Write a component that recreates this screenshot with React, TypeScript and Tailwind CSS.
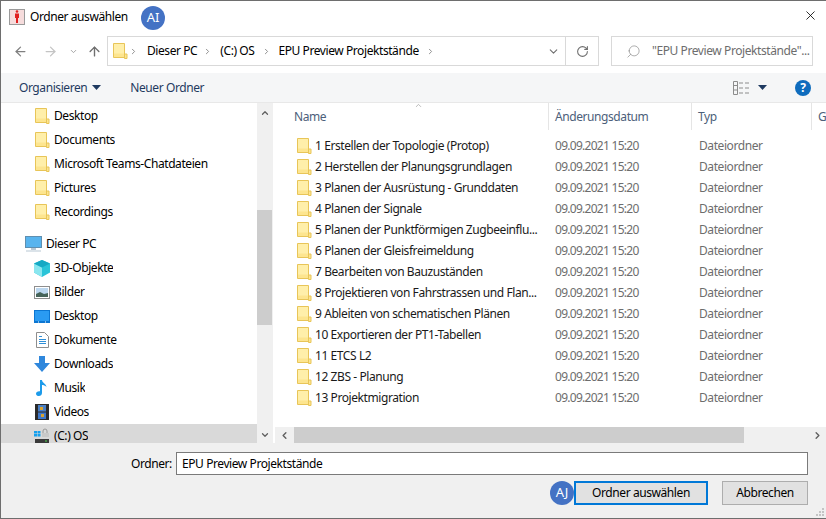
import React from 'react';
import { ArrowLeft, ArrowRight, ArrowUp, ChevronDown, ChevronRight, ChevronLeft, ChevronUp, RotateCw, Search, X } from 'lucide-react';

const FolderIcon = () => (
  <svg width="16" height="16" viewBox="0 0 16 16" className="shrink-0">
    <path d="M1.500 0.500h11v14h-11z" fill="#fde58f" stroke="#e8c558" />
    <path d="M2 1h10v9.500H2z" fill="#ffefaa" />
    <path d="M12.500 11h2.500v4.500h-2.500z" fill="#fde58f" stroke="#e8c558" />
  </svg>
);

const quickFolders = ['Desktop', 'Documents', 'Microsoft Teams-Chatdateien', 'Pictures', 'Recordings'];

const pcItems: { name: string; icon: React.ReactNode }[] = [
  {
    name: '3D-Objekte',
    icon: (
      <svg width="16" height="17" viewBox="0 0 16 17">
        <path d="M8 0l8 3.500v9L8 17 0 12.500v-9z" fill="#29c4d8" />
        <path d="M0 3.500L8 7.500V17L0 12.500z" fill="#8ae6ef" />
        <path d="M8 0l8 3.500-8 4-8-4z" fill="#15a9c4" />
      </svg>
    ),
  },
  {
    name: 'Bilder',
    icon: (
      <svg width="16" height="13" viewBox="0 0 16 13">
        <rect x="0.500" y="0.500" width="15" height="12" fill="#fff" stroke="#8e8e8e" />
        <rect x="2" y="2" width="12" height="9" fill="#bcd7ef" />
        <path d="M2 8l4-2 4 2 4-1v4H2z" fill="#46645a" />
      </svg>
    ),
  },
  {
    name: 'Desktop',
    icon: (
      <svg width="16" height="13" viewBox="0 0 16 13">
        <rect width="16" height="13" fill="#0b76d2" />
        <rect x="1" y="1" width="14" height="10" fill="#2a9bf2" />
        <rect x="4" y="11.500" width="1" height="1" fill="#fff" />
        <rect x="11" y="11.500" width="1" height="1" fill="#fff" />
      </svg>
    ),
  },
  {
    name: 'Dokumente',
    icon: (
      <svg width="13" height="16" viewBox="0 0 13 16" className="ml-[2px]">
        <path d="M0.500 0.500h8l4 4v11h-12z" fill="#fff" stroke="#8e8e8e" />
        <path d="M3 4h3v1H3zM3 7h7v1H3zM3 9h7v1H3zM3 11h7v1H3z" fill="#2f8fd8" />
      </svg>
    ),
  },
  {
    name: 'Downloads',
    icon: (
      <svg width="16" height="16" viewBox="0 0 16 16">
        <path d="M5 0h6v7h5l-8 9-8-9h5z" fill="#2f87dc" />
      </svg>
    ),
  },
  {
    name: 'Musik',
    icon: (
      <svg width="11" height="16" viewBox="0 0 11 16" className="ml-[2px]">
        <path d="M4 0h2c0 3 4 3.500 4.500 7C9 5.500 7.500 5 6 5v8c0 2-1.500 3-3 3s-3-.8-3-2.300C0 12 1.800 11 4 11.300z" fill="#1d9bea" />
      </svg>
    ),
  },
  {
    name: 'Videos',
    icon: (
      <svg width="14" height="16" viewBox="0 0 14 16" className="ml-[1px]">
        <rect width="14" height="16" fill="#2b2b2b" />
        <rect x="3" y="1" width="8" height="6.500" fill="#4a7fc4" />
        <rect x="3" y="8.500" width="8" height="6.500" fill="#3f78c9" />
        <path d="M5 3h3v3H5zM6 10h3v3H6z" fill="#d8a330" />
      </svg>
    ),
  },
];

const folders = [
  '1 Erstellen der Topologie (Protop)',
  '2 Herstellen der Planungsgrundlagen',
  '3 Planen der Ausrüstung - Grunddaten',
  '4 Planen der Signale',
  '5 Planen der Punktförmigen Zugbeeinflu...',
  '6 Planen der Gleisfreimeldung',
  '7 Bearbeiten von Bauzuständen',
  '8 Projektieren von Fahrstrassen und Flan...',
  '9 Ableiten von schematischen Plänen',
  '10 Exportieren der PT1-Tabellen',
  '11 ETCS L2',
  '12 ZBS - Planung',
  '13 Projektmigration',
];

const NavRow = ({ icon, name, selected }: { icon: React.ReactNode; name: string; selected?: boolean }) => (
  <div className={`flex h-6 items-center ${selected ? 'bg-[#d9d9d9]' : ''}`}>
    <div className="ml-[33px] flex w-[20px] shrink-0 justify-start">{icon}</div>
    <span className="truncate">{name}</span>
  </div>
);

export default function App() {
  return (
    <div className="relative flex h-[519px] w-[826px] flex-col overflow-hidden border-l border-t border-b border-[#6e6e6e] bg-white font-['Noto_Sans','Open_Sans',sans-serif] text-[12px] tracking-[-0.42px] text-black">
      {/* title bar */}
      <div className="flex h-[31px] shrink-0 items-center">
        <div className="ml-[8px] flex h-[16px] w-[16px] items-center justify-center border border-[#9a9a9a] bg-[#f6dcdc]">
          <svg width="6" height="13" viewBox="0 0 6 13">
            <circle cx="3" cy="1.500" r="1.300" fill="#e02020" />
            <path d="M1 3.500h4V8H4v5H2V8H1z" fill="#e02020" />
          </svg>
        </div>
        <span className="ml-[5px]">Ordner auswählen</span>
        <X size={15} strokeWidth={1.300} className="ml-auto mr-[8px] mt-[-2px]" />
      </div>

      {/* address bar */}
      <div className="flex h-[41px] shrink-0 items-start pt-[4px]">
        <div className="flex h-[30px] w-[106px] items-center text-[#7f7f7f]">
          <ArrowLeft size={15} strokeWidth={2} className="ml-[12px]" />
          <ArrowRight size={15} strokeWidth={2} className="ml-[15px] text-[#c4c4c4]" />
          <ChevronDown size={9} strokeWidth={2.500} className="ml-[11px] text-[#a0a0a0]" />
          <ArrowUp size={15} strokeWidth={2.200} className="ml-[9px] text-[#6f6f6f]" />
        </div>
        <div className="flex h-[30px] w-[458px] items-center border border-r-0 border-[#d9d9d9]">
          <div className="ml-[4px]"><FolderIcon /></div>
          <ChevronRight size={9} strokeWidth={2.500} className="ml-[1px] text-[#8a8a8a]" />
          <span className="ml-[9px]">Dieser PC</span>
          <ChevronRight size={9} strokeWidth={2.500} className="ml-[6px] text-[#8a8a8a]" />
          <span className="ml-[8px]">(C:) OS</span>
          <ChevronRight size={9} strokeWidth={2.500} className="ml-[8px] text-[#8a8a8a]" />
          <span className="ml-[7px]">EPU Preview Projektstände</span>
          <ChevronRight size={9} strokeWidth={2.500} className="ml-[7px] text-[#8a8a8a]" />
          <ChevronDown size={13} strokeWidth={2} className="ml-auto mr-[5px] text-[#6f6f6f]" />
        </div>
        <div className="flex h-[30px] w-[34px] items-center justify-center border border-[#d9d9d9]">
          <RotateCw size={13} strokeWidth={2} className="text-[#6f6f6f]" />
        </div>
        <div className="ml-[12px] flex h-[30px] w-[202px] items-center border border-[#d9d9d9] text-[#6d6d6d]">
          <Search size={15} strokeWidth={1} className="ml-[14px] -scale-x-100 text-[#7d7d7d]" />
          <span className="ml-[11px] whitespace-nowrap">"EPU Preview Projektstände"...</span>
        </div>
      </div>

      {/* toolbar */}
      <div className="flex h-[30px] shrink-0 items-center border-b border-[#e8e8e8] bg-[#f5f6f7] text-[#1f3a60]">
        <span className="ml-[18px]">Organisieren</span>
        <svg width="9" height="5" viewBox="0 0 9 5" className="ml-[5px]"><path d="M0 0h9L4.500 5z" fill="#1f3a60" /></svg>
        <span className="ml-[29px]">Neuer Ordner</span>
        <svg width="17" height="14" viewBox="0 0 17 14" className="ml-auto">
          <path d="M0.500 0.500h4v13h-4zM0.500 4.500h4M0.500 9h4" fill="none" stroke="#8c8c8c" />
          <path d="M6 2h4M12 2h4M6 7h4M12 7h4M6 12h4M12 12h4" stroke="#8c8c8c" />
        </svg>
        <svg width="9" height="5" viewBox="0 0 9 5" className="ml-[8px]"><path d="M0 0h9L4.500 5z" fill="#1f3a60" /></svg>
        <div className="ml-[28px] mr-[15px] flex h-[16px] w-[16px] items-center justify-center rounded-full bg-[#0f6cbd] text-[12px] font-bold text-white">?</div>
      </div>

      {/* main area */}
      <div className="flex h-[340px] shrink-0">
        {/* navigation tree */}
        <div className="w-[256px] shrink-0 overflow-hidden pt-[1px]">
          {quickFolders.map((name) => (
            <NavRow key={name} name={name} icon={<FolderIcon />} />
          ))}
          <div className="h-[8px]" />
          <div className="flex h-6 items-center">
            <svg width="17" height="16" viewBox="0 0 17 16" className="ml-[24px] shrink-0">
              <rect x="0.500" y="0.500" width="16" height="11" fill="#58b4ee" stroke="#5f8fb0" />
              <path d="M6 12h5v2H6zM1 14.500h15v1H1z" fill="#b8c8d4" />
            </svg>
            <span className="ml-[4px]">Dieser PC</span>
          </div>
          {pcItems.map((item) => (
            <NavRow key={item.name} name={item.name} icon={item.icon} />
          ))}
          <NavRow
            name="(C:) OS"
            selected
            icon={
              <svg width="16" height="16" viewBox="0 0 16 16">
                <path d="M0 3h3v2.500H0zM3.500 3h3v2.500h-3zM0 6h3v2.500H0zM3.500 6h3v2.500h-3z" fill="#14a0ee" />
                <path d="M9 5V3a2 2 0 0 1 4 0v2" fill="none" stroke="#9a9a9a" />
                <rect x="8" y="5" width="7" height="4" fill="#c9c9c9" />
                <rect x="1" y="11" width="14" height="4" fill="#3a3a3a" />
                <rect x="11" y="12.500" width="2" height="1" fill="#4fd04f" />
              </svg>
            }
          />
        </div>

        {/* tree scrollbar */}
        <div className="flex w-[15px] shrink-0 flex-col bg-[#f0f0f0]">
          <div className="flex h-[19px] items-center justify-center"><ChevronUp size={10} strokeWidth={3} className="text-[#606060]" /></div>
          <div className="h-[88px]" />
          <div className="h-[115px] bg-[#cdcdcd]" />
          <div className="flex-1" />
          <div className="flex h-[17px] items-center justify-center"><ChevronDown size={10} strokeWidth={3} className="text-[#606060]" /></div>
        </div>
        <div className="w-[3px] shrink-0 border-l border-[#f0f0f0]" />

        {/* file list */}
        <div className="flex min-w-0 flex-1 flex-col">
          <div className="relative flex h-[27px] shrink-0 text-[#4c607a]">
            <div className="flex w-[274px] items-center border-r border-[#e5e5e5] pl-[19px]">Name</div>
            <div className="flex w-[143px] items-center border-r border-[#e5e5e5] pl-[6px]">Änderungsdatum</div>
            <div className="flex w-[120px] items-center border-r border-[#e5e5e5] pl-[6px]">Typ</div>
            <div className="flex flex-1 items-center overflow-hidden pl-[6px]">G</div>
            <ChevronUp size={9} strokeWidth={1.500} className="absolute left-[139px] top-[-2px] text-[#8a8a8a]" />
          </div>
          <div className="flex flex-1 flex-col pt-[5px]">
            {folders.map((name) => (
              <div key={name} className="flex h-[21px] shrink-0 items-center">
                <div className="ml-[21px] w-[19px] shrink-0"><FolderIcon /></div>
                <span className="w-[240px] truncate whitespace-nowrap text-[#1a1a1a]">{name}</span>
                <span className="w-[144px] tracking-[-0.72px] text-[#6d6d6d]">09.09.2021 15:20</span>
                <span className="text-[#6d6d6d]">Dateiordner</span>
              </div>
            ))}
          </div>
          {/* horizontal scrollbar */}
          <div className="flex h-[16px] shrink-0 items-stretch bg-[#f0f0f0]">
            <div className="flex w-[19px] items-center justify-center"><ChevronLeft size={11} strokeWidth={3} className="text-[#606060]" /></div>
            <div className="w-[450px] bg-[#cdcdcd]" />
            <div className="flex-1" />
            <div className="flex w-[17px] items-center justify-center"><ChevronRight size={11} strokeWidth={3} className="text-[#606060]" /></div>
          </div>
        </div>
      </div>

      {/* footer */}
      <div className="relative flex flex-1 flex-col bg-[#f0f0f0]">
        <div className="mt-[9px] flex items-center">
          <span className="ml-[130px] w-[45px]">Ordner:</span>
          <div className="flex h-[23px] w-[632px] items-center border border-[#7a7a7a] bg-white pl-[5px]">EPU Preview Projektstände</div>
        </div>
        <div className="mt-[6px] flex items-center justify-end pr-[18px]">
          <div className="flex h-[24px] w-[134px] items-center justify-center border-2 border-[#0078d7] bg-[#e1e1e1]">Ordner auswählen</div>
          <div className="ml-[14px] flex h-[24px] w-[86px] items-center justify-center border border-[#adadad] bg-[#e1e1e1]">Abbrechen</div>
        </div>
        <svg width="10" height="10" viewBox="0 0 10 10" className="absolute bottom-[1px] right-[1px]">
          <path d="M7 1h2v2H7zM4 4h2v2H4zM7 4h2v2H7zM1 7h2v2H1zM4 7h2v2H4zM7 7h2v2H7z" fill="#c4c4c4" />
        </svg>
      </div>

      {/* avatar badges over the dialog */}
      <div className="absolute left-[140px] top-[5px] flex h-[24px] w-[24px] items-center justify-center rounded-full bg-[#4472c4] text-[13px] tracking-normal text-white">AI</div>
      <div className="absolute left-[549px] top-[480px] flex h-[24px] w-[24px] items-center justify-center rounded-full bg-[#4472c4] text-[13px] tracking-normal text-white">AJ</div>
    </div>
  );
}
